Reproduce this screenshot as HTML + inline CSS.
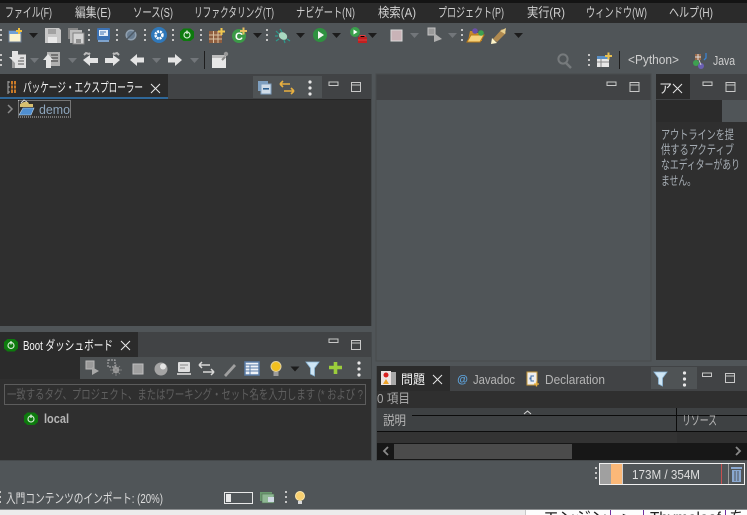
<!DOCTYPE html>
<html><head><meta charset="utf-8"><style>
html,body{margin:0;padding:0;background:#505558;width:747px;height:515px;overflow:hidden}
svg{display:block}
text{font-family:"Liberation Sans","Noto Sans CJK JP",sans-serif;font-size:13px;fill:#cfcfcf}
</style></head><body>
<svg width="747" height="515" viewBox="0 0 747 515" xmlns="http://www.w3.org/2000/svg">
<defs>
<g id="gv"><rect x="0" y="0" width="2" height="2"/><rect x="0" y="5" width="2" height="2"/><rect x="0" y="10" width="2" height="2"/></g>
<path id="ar" d="M0 0h9l-4.500 5z"/>
<g id="mm"><rect x="0" y="0" width="9" height="3.500" fill="none" stroke="#c8c8c8"/></g>
<g id="mx"><rect x="0" y="0" width="9" height="9" fill="none" stroke="#c8c8c8"/><path d="M0 2.500h9" stroke="#c8c8c8"/></g>
<g id="cl"><path d="M0 0L9 9M9 0L0 9" stroke="#e8e8e8" stroke-width="1" fill="none"/></g>
<g id="bt"><path d="M-3.500-6.500h7l3.500 3v6.500l-3.500 3h-7l-3.500-3v-6.500z" fill="#0d7a0d"/><circle r="3" fill="none" stroke="#cfe8cf" stroke-width="1.200"/><path d="M0-4.500v3.500" stroke="#e8f4e8" stroke-width="1.200"/></g>
<g id="dots"><circle cx="0" cy="0" r="1.600" fill="#e8e8e8"/><circle cx="0" cy="6" r="1.600" fill="#e8e8e8"/><circle cx="0" cy="12" r="1.600" fill="#e8e8e8"/></g>
</defs>

<rect width="747" height="515" fill="#505558"/>
<!-- menu -->
<rect width="747" height="23" fill="#2b2b2b"/>
<rect width="747" height="3" fill="#141414"/>
<text x="5" y="17" textLength="47" lengthAdjust="spacingAndGlyphs">ファイル(F)</text>
<text x="75" y="17" textLength="36" lengthAdjust="spacingAndGlyphs">編集(E)</text>
<text x="133" y="17" textLength="40" lengthAdjust="spacingAndGlyphs">ソース(S)</text>
<text x="194" y="17" textLength="80" lengthAdjust="spacingAndGlyphs">リファクタリング(T)</text>
<text x="296" y="17" textLength="59" lengthAdjust="spacingAndGlyphs">ナビゲート(N)</text>
<text x="378" y="17" textLength="38" lengthAdjust="spacingAndGlyphs">検索(A)</text>
<text x="438" y="17" textLength="66" lengthAdjust="spacingAndGlyphs">プロジェクト(P)</text>
<text x="527" y="17" textLength="38" lengthAdjust="spacingAndGlyphs">実行(R)</text>
<text x="586" y="17" textLength="61" lengthAdjust="spacingAndGlyphs">ウィンドウ(W)</text>
<text x="669" y="17" textLength="44" lengthAdjust="spacingAndGlyphs">ヘルプ(H)</text>

<!-- toolbar grips -->
<g fill="#c4c4c4">
<use href="#gv" x="0" y="29"/><use href="#gv" x="88" y="29"/><use href="#gv" x="116" y="29"/><use href="#gv" x="144" y="29"/><use href="#gv" x="172" y="29"/><use href="#gv" x="200" y="29"/><use href="#gv" x="266" y="29"/><use href="#gv" x="461" y="29"/>
<use href="#gv" x="0" y="54"/><use href="#gv" x="588" y="54"/>
</g>
<g fill="#1c1c1c">
<use href="#ar" x="29" y="33"/><use href="#ar" x="253" y="33"/><use href="#ar" x="296" y="33"/><use href="#ar" x="332" y="33"/><use href="#ar" x="368" y="33"/><use href="#ar" x="514" y="33"/>
</g>
<g fill="#72767a">
<use href="#ar" x="410" y="33"/><use href="#ar" x="448" y="33"/><use href="#ar" x="30" y="58"/><use href="#ar" x="68" y="58"/><use href="#ar" x="152" y="58"/><use href="#ar" x="190" y="58"/>
</g>

<!-- row1 icons -->
<rect x="9" y="31" width="12" height="11" fill="#fbf3cf" stroke="#6e7f96"/><rect x="9" y="31" width="12" height="3" fill="#6fa0d8"/><path d="M16 31h6M19 28v6" stroke="#f0c040" stroke-width="2"/>
<path d="M45 28h14l2 2v13h-16z" fill="#c8c8c8"/><rect x="48" y="29" width="8" height="5" fill="#a2a2a2"/><rect x="48" y="37" width="9" height="6" fill="#e8e8e8"/>
<rect x="68" y="28" width="10" height="11" fill="#888"/><path d="M70 30h12v13h-12z" fill="#bdbdbd"/><path d="M73 33h11v11h-11z" fill="#d4d4d4" stroke="#808080"/><rect x="76" y="39" width="5" height="4" fill="#909090"/>
<rect x="97" y="28" width="13" height="12" rx="1" fill="#3c72b4"/><rect x="99" y="30" width="9" height="6" fill="#e6eef8"/><path d="M100 32h6M100 34h4" stroke="#3c72b4"/><rect x="98" y="40" width="11" height="2" fill="#7fa3cc"/>
<circle cx="131" cy="35" r="4.800" fill="#6a7e92" stroke="#90a0b0" stroke-width="1.500"/><path d="M127 39l8-8" stroke="#4d5a66" stroke-width="1.500"/>
<circle cx="159" cy="35" r="8" fill="#2f78ba"/><circle cx="159" cy="35" r="3.400" fill="none" stroke="#fff" stroke-width="2.600" stroke-dasharray="2 .8"/>
<use href="#bt" x="187" y="35"/>
<rect x="209" y="31" width="13" height="12" fill="#8f5e3f"/><path d="M213.500 31v12M218 31v12M209 35h13M209 39h13" stroke="#d9c0a0"/><path d="M218 31.500h7M221.500 28v7" stroke="#f0c850" stroke-width="2"/>
<circle cx="239" cy="36" r="7" fill="#3b9a47"/><text x="235" y="40" style="font-size:11px;font-weight:bold;fill:#fff">C</text><path d="M240 31h7M243.500 27.500v7" stroke="#e8c060" stroke-width="2"/>
<ellipse cx="283" cy="36" rx="4.500" ry="3.500" transform="rotate(35 283 36)" fill="#a8d8c0"/><path d="M276 31l3 3M276 41l3-2M290 41l-3-2M280 29l2 3M285 43l-1-3M275 36h3" stroke="#2c9a8c" stroke-width="1.200"/>
<circle cx="320" cy="35" r="7" fill="#2f9140"/><path d="M318 31l6 4-6 4z" fill="#f0f4f0"/>
<circle cx="355" cy="32" r="5" fill="#3aa04c"/><path d="M353.500 29.500l4 2.500-4 2.500z" fill="#fff"/><rect x="358" y="37" width="9" height="6" fill="#c02020"/><path d="M360 37v-1.500h5v1.500M358 40h9" stroke="#e04040"/>
<rect x="391" y="30" width="11" height="11" fill="#c9b3b7" stroke="#dadada"/>
<rect x="428" y="28" width="7" height="7" fill="#9a9a9a" stroke="#c4c4c4"/><path d="M434 33l8 6-8 3z" fill="#b0b0b0"/>
<path d="M468 41l2-10h5l1 2h6v8z" fill="#c88a2a"/><path d="M467 42l4-7h13l-4 7z" fill="#f6d27a" stroke="#b87a1a"/><circle cx="475" cy="31" r="2.800" fill="#6a4fa8"/><circle cx="481" cy="33" r="2.800" fill="#3ea050"/>
<path d="M493 39l9-10 4 4-9 9z" fill="#b08a50"/><path d="M500 31l6-3-1 6z" fill="#e8d090"/><path d="M492 38l5 5-6 1z" fill="#fff4c8"/>

<!-- row2 icons -->
<path d="M12 54h14v14h-14z" fill="#9c9c9c"/><rect x="15" y="55" width="11" height="13" fill="#e0e0e0"/><path d="M18 58h6M18 61h6M18 64h6" stroke="#555"/><path d="M8 51h6v6h3l-6 6-6-6h3z" fill="#e4e4e4" transform="translate(4 0)"/>
<rect x="47" y="52" width="13" height="14" fill="#b0b0b0"/><path d="M51 55h7M51 58h7M51 61h7" stroke="#333"/><path d="M53 60h-2v8h-5v-8h-3l5-6z" fill="#e4e4e4"/>
<path d="M83 60l7-5v3h8v5h-8v3z" fill="#e4e4e4"/><path d="M84 55l2-2 3 1 1-1" stroke="#bbb" stroke-width="2" fill="none"/>
<path d="M120 60l-7-5v3h-8v5h8v3z" fill="#e4e4e4"/><path d="M119 55l-2-2-3 1-1-1" stroke="#bbb" stroke-width="2" fill="none"/>
<path d="M130 60l7-6v3.500h7v5h-7v3.500z" fill="#e4e4e4"/>
<path d="M182 60l-7-6v3.500h-7v5h7v3.500z" fill="#e4e4e4"/>
<rect x="204" y="51" width="1" height="18" fill="#1e1e1e"/>
<rect x="212" y="55" width="14" height="13" fill="#e8e8e8"/><rect x="212" y="55" width="14" height="3" fill="#bdbdbd"/><path d="M222 60l3-3" stroke="#888" stroke-width="2"/><circle cx="226" cy="54" r="2.200" fill="#999"/>
<circle cx="563" cy="59" r="4.600" fill="none" stroke="#767a7c" stroke-width="2"/><path d="M566 63l5 5" stroke="#767a7c" stroke-width="2.500"/>
<rect x="597" y="56" width="12" height="11" fill="#e8e8e8"/><rect x="597" y="56" width="12" height="3" fill="#5a8fc4"/><path d="M597 62h12M601 59v8" stroke="#888"/><path d="M605 56h7M608.500 52.500v7" stroke="#e8c050" stroke-width="2"/>
<rect x="619" y="51" width="1" height="18" fill="#1e1e1e"/>
<text x="628" y="64" textLength="51" lengthAdjust="spacingAndGlyphs">&lt;Python&gt;</text>
<rect x="695" y="54" width="6" height="6" fill="#9a6a4a"/><path d="M698 54v6M695 57h6" stroke="#ddd"/><path d="M706 53v5l-2 2" stroke="#3b82d0" fill="none" stroke-width="1.300"/><circle cx="696" cy="63" r="3" fill="#3ea050"/><circle cx="701" cy="66" r="3" fill="#6a5fb0"/><path d="M699 60l2 5" stroke="#ccc"/>
<text x="713" y="65" textLength="22" lengthAdjust="spacingAndGlyphs">Java</text>

<!-- package explorer -->
<rect x="0" y="74" width="372" height="26" fill="#414345"/>
<rect x="0" y="74" width="168" height="23" fill="#2b2b2b"/>
<rect x="0" y="97" width="168" height="2.500" fill="#2f6798"/>
<rect x="0" y="99" width="372" height="1" fill="#262626"/>
<rect x="0" y="100" width="372" height="226" fill="#2f2f2f"/>
<rect x="371" y="74" width="1" height="252" fill="#45494b"/>
<path d="M8 81v13M8 82h2M8 87h2M8 92h2" stroke="#aaa" fill="none"/><rect x="11" y="81" width="5" height="12" fill="#c97a28"/><path d="M11 85h5M11 89h5M13.500 81v12" stroke="#2b2b2b"/>
<text x="23" y="92" textLength="120" lengthAdjust="spacingAndGlyphs" style="fill:#f4f4f4">パッケージ・エクスプローラー</text>
<use href="#cl" x="151" y="84"/>
<rect x="253" y="76" width="69" height="22" fill="#4f5355"/>
<rect x="258" y="81" width="10" height="10" fill="#7e9fc0"/><rect x="261" y="84" width="10" height="10" fill="#d0dce8" stroke="#7e9fc0"/><rect x="263" y="88" width="6" height="1.600" fill="#2c5f90"/>
<path d="M281 84h10M281 84l3-3M281 84l3 3M285 91h10M295 91l-3-3M295 91l-3 3" stroke="#e8b040" stroke-width="1.600" fill="none" transform="translate(-1 0)"/>
<use href="#dots" x="310" y="82"/>
<use href="#mm" x="329" y="82"/><use href="#mx" x="351.500" y="82.500"/>
<path d="M8 105l4 4-4 4" stroke="#8a8a8a" stroke-width="1.500" fill="none"/>
<rect x="18.500" y="100.500" width="52" height="16.500" fill="none" stroke="#bbb" stroke-dasharray="1 1"/>
<path d="M20 104l4-2h4l1 2h4v3h-13z" fill="#d8c070"/><path d="M19 115l4-7h11l-3 7z" fill="#4f8ed0" stroke="#bcd4ea" stroke-width=".6"/><path d="M21 103l3-3 3 2" stroke="#ddd" fill="none"/>
<text x="39" y="114" textLength="31" lengthAdjust="spacingAndGlyphs" style="fill:#8ea6bd">demo</text>

<!-- editor -->
<rect x="376" y="74" width="275" height="26" fill="#414345"/>
<rect x="376" y="74" width="275" height="287" fill="none" stroke="#474b4d"/>
<use href="#mm" x="607" y="82"/><use href="#mx" x="630" y="82.500"/>

<!-- outline -->
<rect x="656" y="74" width="91" height="26" fill="#414345"/>
<rect x="656" y="74" width="34" height="25" fill="#2b2b2b"/>
<rect x="656" y="100" width="66" height="22" fill="#2b2b2b"/>
<rect x="656" y="122" width="91" height="238" fill="#2f2f2f"/>
<text x="659" y="93" style="font-size:13px;fill:#e8e8e8">ア</text>
<use href="#cl" x="673" y="84"/>
<use href="#mm" x="703" y="82"/><use href="#mx" x="726" y="82.500"/>
<text x="661" y="139" textLength="73" lengthAdjust="spacingAndGlyphs" style="fill:#a6adb4;font-size:12.500px">アウトラインを提</text>
<text x="661" y="154" textLength="73" lengthAdjust="spacingAndGlyphs" style="fill:#a6adb4;font-size:12.500px">供するアクティブ</text>
<text x="661" y="169" textLength="79" lengthAdjust="spacingAndGlyphs" style="fill:#a6adb4;font-size:12.500px">なエディターがあり</text>
<text x="661" y="185" textLength="35" lengthAdjust="spacingAndGlyphs" style="fill:#a6adb4;font-size:12.500px">ません。</text>

<!-- boot dashboard -->
<rect x="0" y="332" width="372" height="25" fill="#414345"/>
<rect x="0" y="332" width="138" height="25" fill="#2b2b2b"/>
<rect x="0" y="357" width="80" height="22" fill="#2b2b2b"/>
<rect x="80" y="357" width="291" height="22" fill="#4d5153"/>
<rect x="0" y="379" width="371" height="81" fill="#2f2f2f"/>
<rect x="371" y="332" width="1" height="129" fill="#45494b"/>
<rect x="0" y="460" width="372" height="1" fill="#45494b"/>
<use href="#bt" x="11" y="345.500"/>
<text x="23" y="350" textLength="90" lengthAdjust="spacingAndGlyphs" style="fill:#f4f4f4">Boot ダッシュボード</text>
<use href="#cl" x="121" y="341"/>
<use href="#mm" x="329" y="339"/><use href="#mx" x="351.500" y="340.500"/>
<rect x="86" y="361" width="8" height="8" fill="#999" stroke="#bbb"/><path d="M92 367l7 4-7 4z" fill="#a8a8a8"/>
<rect x="108" y="360" width="7" height="7" fill="none" stroke="#b4b4b4" stroke-dasharray="2 1"/><circle cx="116" cy="370" r="3.200" fill="#a4a4a4"/><path d="M112 366l8 8M120 366l-8 8M116 364v12M110 370h12" stroke="#8c8c8c" stroke-width=".8"/>
<rect x="133" y="364" width="10" height="10" fill="#a0a0a0" stroke="#c0c0c0"/>
<circle cx="161" cy="369" r="6.500" fill="#a4a4a4"/><circle cx="163" cy="366.500" r="3" fill="#e4e4e4"/>
<rect x="178" y="362" width="12" height="10" rx="1" fill="#dedede"/><path d="M180 365h8M180 368h5" stroke="#888"/><rect x="177" y="373" width="14" height="2" fill="#bdbdbd"/>
<path d="M201 365h11M201 365l3-3M201 365l3 3M205 372h11M216 372l-3-3M216 372l-3 3" stroke="#d8d8d8" stroke-width="1.500" fill="none" transform="translate(-2 0)"/>
<path d="M224 375l10-11 2 2-10 11z" fill="#a0a0a0"/>
<rect x="245" y="362" width="14" height="13" fill="#eef2f8" stroke="#5a7ca8" stroke-width="1.500"/><path d="M245 365h14M245 368h14M245 371h14M250 365v10" stroke="#5a7ca8"/>
<circle cx="276" cy="366.500" r="5" fill="#f2c020" stroke="#e0d0a0"/><rect x="273.500" y="372" width="5" height="4" fill="#9c9c9c"/>
<use href="#ar" x="290.500" y="366.500" fill="#1c1c1c"/>
<path d="M306 362h13l-4.500 6v8l-4-2v-6z" fill="#cfe6f5" stroke="#8eb8d8" stroke-width=".8"/>
<path d="M329 367.500h13M335.500 362v12" stroke="#9ccd3c" stroke-width="3.600"/>
<use href="#dots" x="359" y="363"/>
<rect x="4.500" y="384.500" width="361" height="20" fill="#2f2f2f" stroke="#5c5c5c"/>
<text x="7" y="399" textLength="356" lengthAdjust="spacingAndGlyphs" style="fill:#5f5f5f">一致するタグ、プロジェクト、またはワーキング・セット名を入力します (* および ?</text>
<use href="#bt" x="31" y="419"/>
<text x="44" y="423" textLength="25" lengthAdjust="spacingAndGlyphs" style="fill:#b5b5b5;font-weight:bold">local</text>

<!-- problems -->
<rect x="377" y="366" width="370" height="25" fill="#414345"/>
<rect x="377" y="366" width="73" height="25" fill="#2b2b2b"/>
<rect x="651" y="367" width="46" height="22" fill="#4f5355"/>
<rect x="377" y="391" width="370" height="69" fill="#2f2f2f"/>
<rect x="376" y="366" width="1" height="95" fill="#45494b"/>
<rect x="377" y="460" width="370" height="1" fill="#45494b"/>
<rect x="381" y="371" width="10" height="14" fill="#ece4e4"/><circle cx="386" cy="375" r="2.500" fill="#d82020"/><path d="M386 379l3 5h-6z" fill="#eda32a"/><rect x="391" y="372" width="5" height="13" fill="#a8a8a8"/>
<text x="401" y="384" textLength="24" lengthAdjust="spacingAndGlyphs" style="fill:#f4f4f4">問題</text>
<use href="#cl" x="433" y="375"/>
<text x="457" y="383" style="font-size:11px;font-weight:bold;font-style:italic;fill:#5fa6e0">@</text>
<text x="473" y="384" textLength="42" lengthAdjust="spacingAndGlyphs" style="fill:#b5b5b5">Javadoc</text>
<rect x="527" y="372" width="10" height="13" fill="#eee" stroke="#c89a3a"/><path d="M534 376h-3v2h-1v1h1v2h3" stroke="#3f6fa8" fill="none"/><path d="M534 384h5M536.500 381.500v5" stroke="#e8b040" stroke-width="1.300"/>
<text x="545" y="384" textLength="60" lengthAdjust="spacingAndGlyphs" style="fill:#b5b5b5">Declaration</text>
<path d="M654 372h13l-4.500 6v8l-4-2v-6z" fill="#cfe6f5" stroke="#8eb8d8" stroke-width=".8"/>
<use href="#dots" x="684.500" y="373"/>
<use href="#mm" x="702.500" y="373"/><use href="#mx" x="725.500" y="373.500"/>
<text x="377" y="403" textLength="33" lengthAdjust="spacingAndGlyphs" style="fill:#a8a8a8">0 項目</text>
<rect x="377" y="408" width="370" height="23" fill="#3e4143"/>
<rect x="412" y="415" width="335" height="1" fill="#0c0c0c"/>
<rect x="377" y="431" width="370" height="1.200" fill="#0c0c0c"/>
<rect x="676" y="408" width="1" height="24" fill="#0c0c0c"/>
<path d="M524 414l3.500-3 3.500 3" stroke="#d8d8d8" fill="none"/>
<text x="383" y="425" textLength="23" lengthAdjust="spacingAndGlyphs" style="fill:#b5b5b5">説明</text>
<text x="682" y="425" textLength="35" lengthAdjust="spacingAndGlyphs" style="fill:#b5b5b5">リソース</text>
<rect x="377" y="432" width="300" height="11" fill="#333333"/>
<rect x="677" y="432" width="70" height="11" fill="#2f2f2f"/>
<rect x="377" y="443" width="370" height="17" fill="#171717"/>
<rect x="394" y="444" width="178" height="15" fill="#4b4b4b"/>
<path d="M388 447l-4 4 4 4M736 447l4 4-4 4" stroke="#8a8a8a" stroke-width="1.800" fill="none"/>

<!-- heap -->
<g fill="#c4c4c4"><use href="#gv" x="595" y="467"/></g>
<rect x="599.500" y="463.500" width="145" height="21" fill="#505558" stroke="#f0f0f0"/>
<rect x="600" y="464" width="11" height="20" fill="#a0a0a0"/>
<rect x="611" y="464" width="11" height="20" fill="#fbb878"/>
<rect x="622" y="464" width="1" height="20" fill="#d0d0d0"/>
<rect x="721" y="464" width="1" height="20" fill="#c85050"/>
<rect x="728" y="464" width="1" height="20" fill="#9a9a9a"/>
<text x="632" y="479" textLength="68" lengthAdjust="spacingAndGlyphs" style="fill:#dedede">173M / 354M</text>
<path d="M731 467h11v2h-11zM732 470h9v12h-9z" fill="#8aa8d0"/><path d="M735 471v10M738 471v10" stroke="#505558"/>

<!-- status -->
<g fill="#c4c4c4"><use href="#gv" x="-1" y="491"/><use href="#gv" x="285" y="491"/></g>
<text x="6" y="503" textLength="157" lengthAdjust="spacingAndGlyphs" style="fill:#dcdcdc">入門コンテンツのインポート: (20%)</text>
<rect x="224.500" y="492.500" width="28" height="11" fill="none" stroke="#e8e8e8"/><rect x="226" y="494" width="5" height="8" fill="#e8e8e8"/>
<rect x="260" y="492" width="12" height="9" fill="#6a9a70"/><rect x="262" y="494" width="12" height="9" fill="#8fb894" stroke="#4e6e52" stroke-width=".6"/><rect x="268" y="497" width="6" height="5" fill="#cfd8e4"/>
<circle cx="300" cy="496" r="4.500" fill="#f8d070" stroke="#fbe8b0"/><rect x="298" y="501" width="4" height="3" fill="#d8d8d8"/>

<!-- bottom strip -->
<rect x="0" y="509" width="525" height="6" fill="#ececec"/>
<rect x="0" y="509" width="747" height="1" fill="#8a8d8f"/>
<rect x="525" y="510" width="222" height="5" fill="#fdfdfd"/>
<rect x="525" y="510" width="1" height="5" fill="#c8c8c8"/>
<clipPath id="bc"><rect x="525" y="510" width="222" height="5"/></clipPath>
<g clip-path="url(#bc)">
<text x="543" y="523" textLength="64" lengthAdjust="spacingAndGlyphs" style="fill:#222;font-size:16px">エンジン</text>
<rect x="610" y="510" width="1" height="5" fill="#7030a0"/>
<text x="622" y="523" style="fill:#222;font-size:16px">&gt;</text>
<rect x="643" y="510" width="1" height="5" fill="#7030a0"/>
<text x="650" y="523" textLength="71" lengthAdjust="spacingAndGlyphs" style="fill:#222;font-size:16px">Thymeleaf</text>
<rect x="725" y="510" width="1" height="5" fill="#7030a0"/>
<text x="729" y="523" style="fill:#222;font-size:16px">を</text>
</g>
</svg>
</body></html>
